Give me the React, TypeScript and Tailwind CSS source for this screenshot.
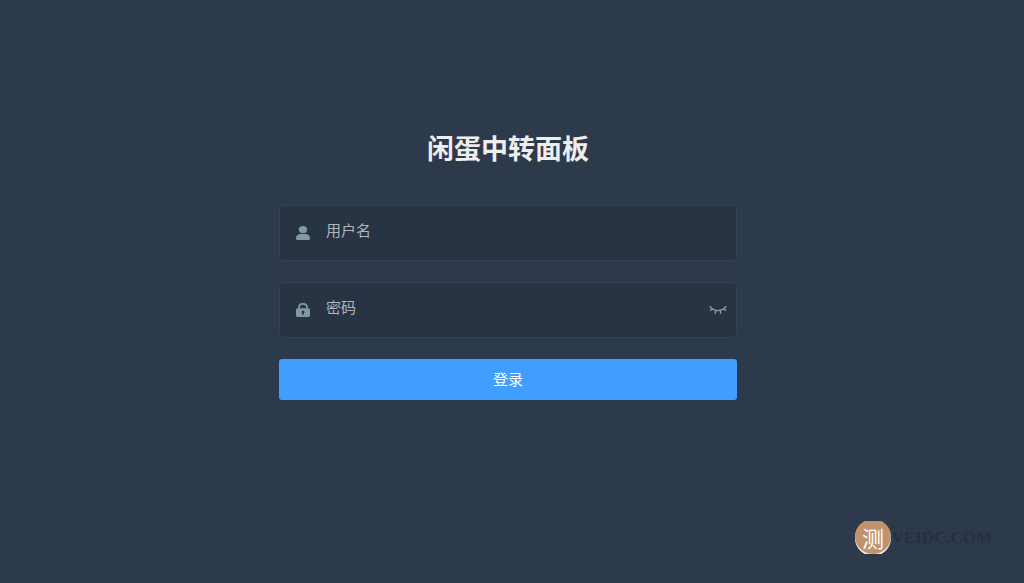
import { useState, type FormEvent } from "react";

function UserIcon() {
  return (
    <svg viewBox="0 0 14 14" className="h-[14px] w-[14px] shrink-0 fill-[#8497a5]" aria-hidden="true">
      <ellipse cx="7" cy="3.6" rx="4.2" ry="3.6" />
      <path d="M0 12.4C0 9.8 2 8 4.2 8H9.8C12 8 14 9.8 14 12.4C14 13.5 13.4 14 12.4 14H1.6C0.6 14 0 13.5 0 12.4Z" />
    </svg>
  );
}

function LockIcon() {
  return (
    <svg viewBox="0 0 14 14" className="h-[14px] w-[14px] shrink-0" aria-hidden="true">
      <path d="M3 6V4.5C3 2.2 4.7 0.9 7 0.9S11 2.2 11 4.5V6" fill="none" stroke="#8497a5" strokeWidth="1.7" />
      <rect x="0" y="5.2" width="14" height="8.8" rx="1.8" fill="#8497a5" />
      <path d="M7 7.6a1.4 1.4 0 0 1 0.7 2.6V12H6.3V10.2A1.4 1.4 0 0 1 7 7.6Z" fill="#283443" />
    </svg>
  );
}

function ClosedEyeIcon() {
  return (
    <svg
      viewBox="0 0 18 10"
      className="h-[10px] w-[18px] fill-none stroke-[#8497a5]"
      strokeWidth="1.4"
      aria-hidden="true"
    >
      <path d="M0.8 1.2C2.6 3.9 5.4 5.6 9 5.6S15.4 3.9 17.2 1.2" />
      <path d="M3.6 3.6L1 5.8M6.8 5.2L6.2 8.8M11.2 5.2L11.8 8.8M14.4 3.6L17 5.8" />
    </svg>
  );
}

function Watermark() {
  return (
    <div className="pointer-events-none absolute right-8 bottom-[29px] flex items-center">
      <svg viewBox="0 0 36 33" className="h-[33px] w-9" aria-hidden="true">
        <defs>
          <clipPath id="seal">
            <rect width="36" height="33" />
          </clipPath>
        </defs>
        <g clipPath="url(#seal)">
          <circle cx="18" cy="17" r="18" fill="#f4efea" />
          <ellipse cx="18" cy="15.5" rx="18" ry="17.5" fill="#c0936d" />
        </g>
        <text x="18" y="26" textAnchor="middle" fontSize="22" fontWeight="400" fill="#ffffff">
          测
        </text>
      </svg>
      <span className="font-['Liberation_Serif',serif] text-[17px] font-bold text-[#243040]">VEIDC.COM</span>
    </div>
  );
}

const fieldClass =
  "flex h-14 items-center rounded-[5px] border border-[#36434f] bg-[#283443] pr-[9px] pl-4";
const inputClass =
  "h-full min-w-0 flex-1 bg-transparent pb-2 pl-4 text-[15px] text-white outline-none placeholder:text-[#b0b6bd]";

export default function App() {
  const [username, setUsername] = useState("");
  const [password, setPassword] = useState("");
  const [showPassword, setShowPassword] = useState(false);

  function handleSubmit(e: FormEvent) {
    e.preventDefault();
  }

  return (
    <main className="relative min-h-screen bg-[#2d3a4b] pt-[127px] pr-2 font-['Noto_Sans_CJK_SC',sans-serif]">
      <form onSubmit={handleSubmit} className="mx-auto w-full max-w-[458px]">
        <h1 className="mb-[37px] text-center text-[27px] leading-[41px] font-bold text-[#eeeeee]">闲蛋中转面板</h1>

        <div className="flex flex-col gap-[21px]">
          <div className={fieldClass}>
            <label htmlFor="username" aria-label="用户名">
              <UserIcon />
            </label>
            <input
              id="username"
              type="text"
              placeholder="用户名"
              autoComplete="username"
              value={username}
              onChange={(e) => setUsername(e.target.value)}
              className={inputClass}
            />
          </div>

          <div className={fieldClass}>
            <label htmlFor="password" aria-label="密码">
              <LockIcon />
            </label>
            <input
              id="password"
              type={showPassword ? "text" : "password"}
              placeholder="密码"
              autoComplete="current-password"
              value={password}
              onChange={(e) => setPassword(e.target.value)}
              className={inputClass}
            />
            <button
              type="button"
              aria-label="显示密码"
              aria-pressed={showPassword}
              onClick={() => setShowPassword(!showPassword)}
            >
              <ClosedEyeIcon />
            </button>
          </div>

          <button type="submit" className="h-[41px] rounded-[3px] bg-[#409eff] text-[15px] text-white hover:bg-[#66b1ff]">
            登录
          </button>
        </div>
      </form>

      <Watermark />
    </main>
  );
}
